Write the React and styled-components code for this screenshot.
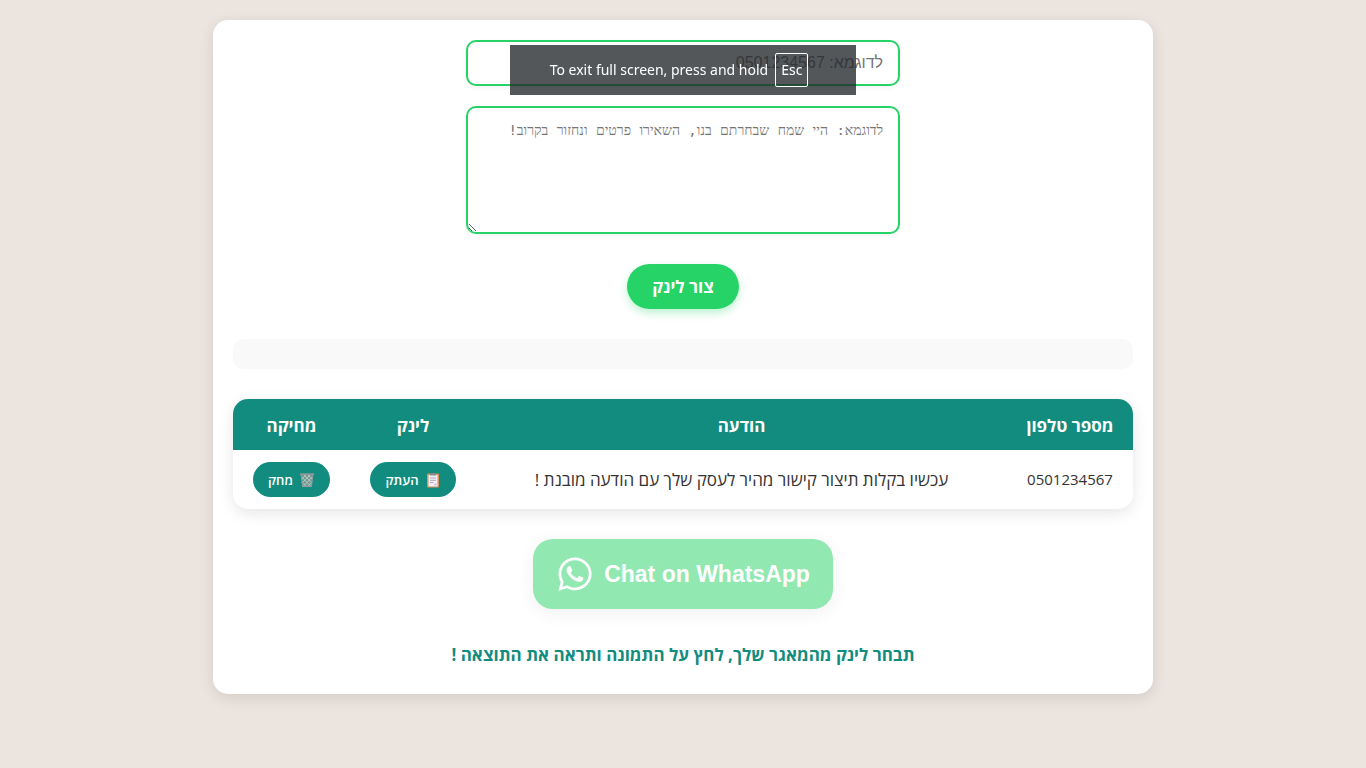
import React from 'react';
import styled, { createGlobalStyle } from 'styled-components';
import { FaWhatsapp } from 'react-icons/fa';

const GlobalStyle = createGlobalStyle`
  * { box-sizing: border-box; }
  body {
    margin: 0;
    background: #ece4de;
    color: #333;
    font-family: 'Open Sans', 'Noto Sans', 'DejaVu Sans', sans-serif;
    font-size: 17px;
    line-height: 21px;
  }
`;

const Page = styled.div`
  padding: 20px;
`;

const Card = styled.main`
  display: flex;
  flex-direction: column;
  align-items: center;
  max-width: 940px;
  margin: 0 auto;
  padding: 20px 20px 29px;
  background: #fff;
  border-radius: 15px;
  box-shadow: 0 4px 15px rgba(0, 0, 0, 0.1);
`;

const Form = styled.form`
  display: flex;
  flex-direction: column;
  align-items: center;
  gap: 20px;
  width: 100%;
`;

const PhoneInput = styled.input`
  width: 100%;
  max-width: 434px;
  height: 46px;
  padding: 12px 15px;
  border: 2px solid #25d366;
  border-radius: 10px;
  background: #fff;
  box-shadow: 0 2px 5px rgba(0, 0, 0, 0.05);
  font: 16px 'Liberation Sans', Arial, sans-serif;
  &::placeholder { color: #757575; opacity: 1; }
`;

const MessageInput = styled.textarea`
  display: block;
  width: 100%;
  max-width: 434px;
  height: 128px;
  padding: 12px 15px;
  border: 2px solid #25d366;
  border-radius: 10px;
  background: #fff;
  box-shadow: 0 2px 5px rgba(0, 0, 0, 0.05);
  font-family: 'DejaVu Sans Mono', 'Liberation Serif', monospace;
  font-size: 14px;
  line-height: 21px;
  resize: both;
  &::placeholder { color: #757575; opacity: 1; }
`;

const CreateButton = styled.button`
  margin-top: 10px;
  padding: 12px 25px;
  border: 0;
  border-radius: 30px;
  background: #25d366;
  color: #fff;
  font: bold 17px/21px 'Open Sans', 'Noto Sans', 'DejaVu Sans', sans-serif;
  box-shadow: 0 4px 8px rgba(37, 211, 102, 0.3);
`;

const Result = styled.div`
  width: 100%;
  height: 30px;
  margin: 30px 0;
  border-radius: 10px;
  background: #f9f9f9;
`;

const TableFrame = styled.div`
  width: 100%;
  overflow: hidden;
  border-radius: 15px;
  box-shadow: 0 4px 15px rgba(0, 0, 0, 0.1);
`;

const LinkTable = styled.table`
  width: 100%;
  border-collapse: collapse;
  table-layout: fixed;
  text-align: center;
`;

const HeadCell = styled.th`
  width: ${(p) => p.$width || 'auto'};
  padding: 16px 0 14px;
  background: #128c7e;
  color: #fff;
  font-weight: 700;
`;

const Cell = styled.td`
  padding: 12px 0;
  font-size: ${(p) => (p.$number ? '15px' : '17px')};
`;

const RowButton = styled.button`
  display: inline-flex;
  align-items: center;
  gap: 6px;
  height: 35px;
  padding: 0 15px;
  border: 0;
  border-radius: 20px;
  background: #128c7e;
  color: #fff;
  vertical-align: top;
  font: 600 13px/18px 'Open Sans', 'Noto Sans', 'DejaVu Sans', sans-serif;
  svg { display: block; }
`;

const ChatLink = styled.a`
  display: flex;
  align-items: center;
  justify-content: center;
  gap: 10px;
  direction: ltr;
  width: 300px;
  height: 70px;
  margin: 30px 0 35px;
  border-radius: 20px;
  background: #25d366;
  color: #fff;
  opacity: 0.5;
  box-shadow: 0 4px 15px rgba(0, 0, 0, 0.1);
  font: bold 23px/28px 'Liberation Sans', Arial, sans-serif;
  text-decoration: none;
`;

const Hint = styled.p`
  margin: 0;
  color: #128c7e;
  font-weight: 700;
`;

const FullscreenNotice = styled.div`
  position: fixed;
  top: 45px;
  left: 50%;
  transform: translateX(-50%);
  display: flex;
  align-items: center;
  justify-content: center;
  gap: 7px;
  direction: ltr;
  width: 346px;
  height: 50px;
  padding-right: 8px;
  background: rgba(32, 36, 40, 0.77);
  color: #fff;
  font-family: 'Noto Sans', sans-serif;
  font-size: 14px;
  line-height: 20px;
  white-space: nowrap;
`;

const KeyCap = styled.kbd`
  padding: 6px 5px;
  border: 1px solid #fff;
  border-radius: 2px;
  font: inherit;
`;

const ClipboardIcon = () => (
  <svg width="16" height="16" viewBox="0 0 16 16" aria-hidden="true">
    <rect x="2" y="1.5" width="12" height="14" rx="1" fill="#d9905c" />
    <path d="M3.5 3h9v11.5h-9z" fill="#f4eff8" />
    <path d="M9.5 14.5v-3h3z" fill="#c9bfd3" />
    <path d="M5 3.5V2h1.8a1.2 1.2 0 0 1 2.4 0H11v1.5z" fill="#8c8794" />
    <path d="M5 6h6M5 8.3h6M5 10.6h3.5" stroke="#a99fb5" strokeWidth="0.9" />
  </svg>
);

const TrashIcon = () => (
  <svg width="16" height="16" viewBox="0 0 16 16" aria-hidden="true">
    <path d="M2 2.5h12L12.4 15H3.6z" fill="#6d9991" />
    <path
      d="M2.5 5l9.7 9.5M5 3l8 8M9 3l4.3 4M13.5 5l-9.7 9.5M11 3l-8 8M7 3L2.7 7M2.8 10l5 5M13.2 10l-5 5"
      stroke="#cbd3d2"
      strokeWidth="0.8"
    />
    <path d="M2.2 3l1.4 11.5M13.8 3l-1.4 11.5" stroke="#8f9c9c" strokeWidth="1" />
    <path d="M1 1.2h14v2H1z" fill="#8b9798" />
    <path d="M3.4 13.6h9.2V15H3.4z" fill="#929b9c" />
  </svg>
);

export default function App() {
  return (
    <Page dir="rtl" lang="he">
      <GlobalStyle />
      <Card>
        <Form onSubmit={(e) => e.preventDefault()}>
          <PhoneInput type="text" aria-label="מספר טלפון" placeholder="לדוגמא: 0501234567" />
          <MessageInput
            aria-label="הודעה"
            placeholder="לדוגמא: היי שמח שבחרתם בנו, השאירו פרטים ונחזור בקרוב!"
          />
          <CreateButton type="submit">צור לינק</CreateButton>
        </Form>
        <Result />
        <TableFrame>
          <LinkTable>
            <thead>
              <tr>
                <HeadCell $width="14%">מספר טלפון</HeadCell>
                <HeadCell>הודעה</HeadCell>
                <HeadCell $width="14%">לינק</HeadCell>
                <HeadCell $width="13%">מחיקה</HeadCell>
              </tr>
            </thead>
            <tbody>
              <tr>
                <Cell $number>0501234567</Cell>
                <Cell>עכשיו בקלות תיצור קישור מהיר לעסק שלך עם הודעה מובנת !</Cell>
                <Cell>
                  <RowButton type="button"><ClipboardIcon />העתק</RowButton>
                </Cell>
                <Cell>
                  <RowButton type="button"><TrashIcon />מחק</RowButton>
                </Cell>
              </tr>
            </tbody>
          </LinkTable>
        </TableFrame>
        <ChatLink href="#chat">
          <FaWhatsapp size={38} aria-hidden="true" />
          <span>Chat on WhatsApp</span>
        </ChatLink>
        <Hint>תבחר לינק מהמאגר שלך, לחץ על התמונה ותראה את התוצאה !</Hint>
      </Card>
      <FullscreenNotice role="status">
        <span>To exit full screen, press and hold</span>
        <KeyCap>Esc</KeyCap>
      </FullscreenNotice>
    </Page>
  );
}
